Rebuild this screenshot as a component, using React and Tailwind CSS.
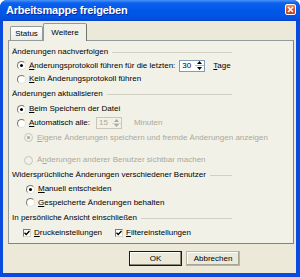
import React from "react";

function Radio({ checked, disabled }) {
  return (
    <span
      className={`flex items-center justify-center w-[9px] h-[9px] shrink-0 rounded-full border ${
        disabled
          ? "border-[#C9C7BA] bg-[#F2F1E8]"
          : "border-t-[#7A7868] border-l-[#7A7868] border-r-[#E4E2D6] border-b-[#E4E2D6] bg-white"
      }`}
    >
      {checked && (
        <span className={`w-[3px] h-[3px] rounded-full ${disabled ? "bg-[#ACA899]" : "bg-black"}`} />
      )}
    </span>
  );
}

function Check() {
  return (
    <span className="flex items-center justify-center w-[8px] h-[8px] shrink-0 border border-t-[#7A7868] border-l-[#7A7868] border-r-[#D8D6CA] border-b-[#D8D6CA] bg-white">
      <svg width="6" height="6" viewBox="0 0 6 6">
        <path d="M0.5 2.8 L2.2 4.5 L5.5 1" stroke="#000" strokeWidth="1.3" fill="none" />
      </svg>
    </span>
  );
}

function Group({ children }) {
  return (
    <div className="flex items-center pl-[3px] w-[223px] h-full">
      <span className="whitespace-nowrap">{children}</span>
      <span className="flex-1 ml-[4px] mt-[1px] h-px bg-[#D2D0C4]" />
    </div>
  );
}

function Spin({ value, disabled }) {
  return (
    <div
      className={`flex h-[12px] w-[26px] border ${
        disabled ? "border-[#C9C7BA] bg-[#F2F1E8] text-[#ACA899]" : "border-[#7F9DB9] bg-white text-black"
      }`}
    >
      <span className="flex-1 pl-[2px] leading-[10px]">{value}</span>
      <div className="w-[9px] flex flex-col">
        <span
          className={`flex-1 flex items-center justify-center border-b ${
            disabled ? "border-[#D8D6CA]" : "border-[#B9B7AC]"
          }`}
        >
          <svg width="5" height="3" viewBox="0 0 5 3">
            <path d="M0 3 L2.5 0 L5 3 Z" fill={disabled ? "#ACA899" : "#000"} />
          </svg>
        </span>
        <span className="flex-1 flex items-center justify-center">
          <svg width="5" height="3" viewBox="0 0 5 3">
            <path d="M0 0 L2.5 3 L5 0 Z" fill={disabled ? "#ACA899" : "#000"} />
          </svg>
        </span>
      </div>
    </div>
  );
}

export default function App() {
  return (
    <div className="w-[300px] h-[277px] flex flex-col bg-[#0A4BDF] rounded-t-[7px] overflow-hidden font-['Liberation_Sans',Arial,sans-serif] text-[8px] leading-none text-black">
      <div className="h-[21px] shrink-0 flex items-center pl-[6px] pr-[4px] bg-[linear-gradient(to_bottom,#4a94f8_0%,#0c61ee_14%,#0058e8_50%,#0053e2_85%,#0843c9_100%)]">
        <span className="text-white font-bold text-[11px] tracking-[-0.2px] [text-shadow:1px_1px_0_#0a2a9c]">
          Arbeitsmappe freigeben
        </span>
        <div className="ml-auto self-start mt-[4px] w-[11px] h-[11px] rounded-[2px] border border-white bg-[linear-gradient(to_bottom,#ee8c6a,#da5430_50%,#c83e1a)] flex items-center justify-center">
          <svg width="7" height="7" viewBox="0 0 7 7">
            <path d="M1 1 L6 6 M6 1 L1 6" stroke="#fff" strokeWidth="1.5" />
          </svg>
        </div>
      </div>

      <div className="flex-1 ml-[3px] mr-[4px] mb-[4px] bg-[#ECE9D8] flex flex-col pt-[2px]">
        <div className="h-[17px] flex items-end pl-[7px]">
          <div className="w-[33px] h-[14px] flex items-center justify-center border border-b-0 border-[#919B9C] rounded-t-[2px] bg-[linear-gradient(to_bottom,#ffffff,#ECEBE6)]">
            Status
          </div>
          <div className="relative z-10 -mb-px w-[44px] h-[18px] flex items-center justify-center border border-b-0 border-[#919B9C] border-r-[#6F7475] rounded-t-[2px] bg-[#F2F1E8]">
            Weitere
          </div>
        </div>

        <div className="ml-[5px] w-[286px] h-[204px] border border-[#919B9C] border-r-[#7E8586] border-b-[#7E8586] bg-[#F2F1E8] flex flex-col pt-[4px]">
          <div className="h-[14px]">
            <Group>Änderungen nachverfolgen</Group>
          </div>
          <div className="h-[13px] flex items-center pl-[8px]">
            <Radio checked />
            <span className="ml-[3px] whitespace-nowrap">
              <u>Ä</u>nderungsprotokoll führen für die letzten:
            </span>
            <span className="ml-[4px]">
              <Spin value="30" />
            </span>
            <span className="ml-[8px]">
              <u>T</u>age
            </span>
          </div>
          <div className="h-[14px] flex items-center pl-[8px]">
            <Radio />
            <span className="ml-[3px] whitespace-nowrap">
              <u>K</u>ein Änderungsprotokoll führen
            </span>
          </div>
          <div className="h-[16px]">
            <Group>Änderungen aktualisieren</Group>
          </div>
          <div className="h-[14px] flex items-center pl-[8px]">
            <Radio checked />
            <span className="ml-[3px] whitespace-nowrap">
              <u>B</u>eim Speichern der Datei
            </span>
          </div>
          <div className="h-[14px] flex items-center pl-[8px]">
            <Radio />
            <span className="ml-[3px] whitespace-nowrap">
              <u>A</u>utomatisch alle:
            </span>
            <span className="ml-[6px]">
              <Spin value="15" disabled />
            </span>
            <span className="ml-[12px] text-[#ACA899]">Minuten</span>
          </div>
          <div className="h-[15px] flex items-center pl-[15px] text-[#ACA899]">
            <Radio checked disabled />
            <span className="ml-[4px] whitespace-nowrap">
              <u>E</u>igene Änderungen speichern und fremde Änderungen anzeigen
            </span>
          </div>
          <div className="h-[8px]" />
          <div className="h-[14px] flex items-center pl-[15px] text-[#ACA899]">
            <Radio disabled />
            <span className="ml-[4px] whitespace-nowrap">
              Ä<u>n</u>derungen anderer Benutzer sichtbar machen
            </span>
          </div>
          <div className="h-[15px]">
            <Group>Widersprüchliche Änderungen verschiedener Benutzer</Group>
          </div>
          <div className="h-[14px] flex items-center pl-[17px]">
            <Radio checked />
            <span className="ml-[3px] whitespace-nowrap">
              <u>M</u>anuell entscheiden
            </span>
          </div>
          <div className="h-[13px] flex items-center pl-[17px]">
            <Radio />
            <span className="ml-[3px] whitespace-nowrap">
              <u>G</u>espeicherte Änderungen behalten
            </span>
          </div>
          <div className="h-[17px]">
            <Group>In persönliche Ansicht einschließen</Group>
          </div>
          <div className="h-[14px] flex items-center pl-[14px]">
            <div className="w-[92px] flex items-center">
              <Check />
              <span className="ml-[3px] whitespace-nowrap">
                <u>D</u>ruckeinstellungen
              </span>
            </div>
            <div className="flex items-center">
              <Check />
              <span className="ml-[3px] whitespace-nowrap">
                <u>F</u>iltereinstellungen
              </span>
            </div>
          </div>
        </div>

        <div className="mt-[7px] h-[15px] flex pl-[126px] gap-[4px]">
          <button className="w-[53px] h-[15px] flex items-center justify-center border border-[#1A1A1A] bg-[#ECE9D8] shadow-[inset_-1px_-1px_0_#8A887C,inset_1px_1px_0_#ffffff] text-[8px]">
            OK
          </button>
          <button className="w-[54px] h-[15px] flex items-center justify-center border border-[#B8B5A8] bg-[#ECE9D8] shadow-[inset_-1px_-1px_0_#A6A496,inset_1px_1px_0_#ffffff] text-[8px]">
            Abbrechen
          </button>
        </div>
      </div>
    </div>
  );
}
